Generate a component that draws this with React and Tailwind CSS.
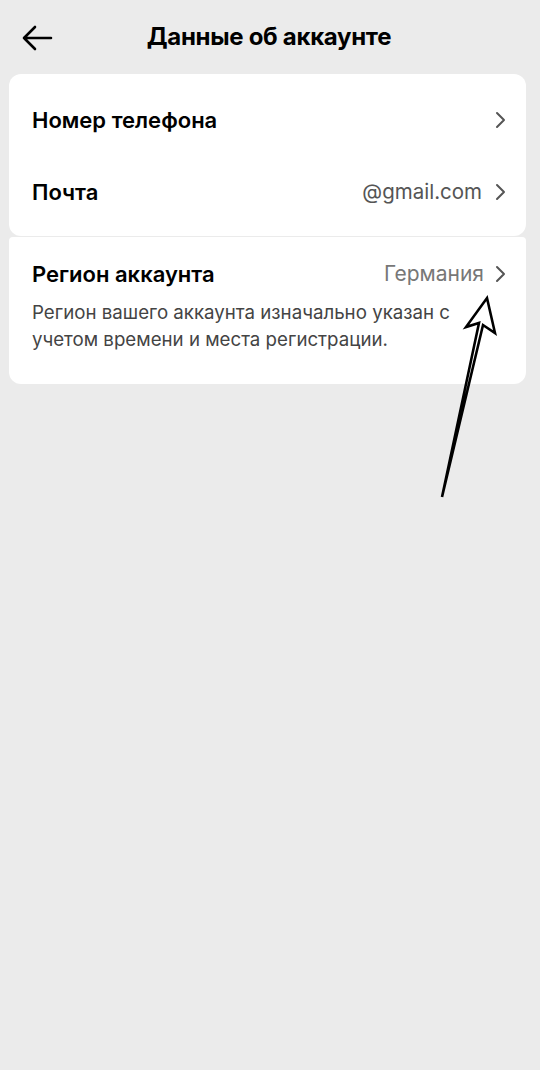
import React from 'react';

const Chevron = () => (
  <svg className="w-[12px] h-[18px] text-[#555]" viewBox="0 0 12 18" fill="none" stroke="currentColor" strokeWidth={2} strokeLinecap="round" strokeLinejoin="round">
    <path d="M3 2l7 7-7 7" />
  </svg>
);

const App = () => {
  return (
    <div className="relative w-[540px] h-[1070px] bg-[#ebebeb] font-['Inter','Noto_Sans',sans-serif] overflow-hidden">
      {/* Header */}
      <div className="relative h-[74px] flex items-center justify-center">
        <button className="absolute left-[21px] top-[24px]">
          <svg className="w-[32px] h-[28px] text-black" viewBox="0 0 32 28" fill="none" stroke="currentColor" strokeWidth={2.6} strokeLinecap="round" strokeLinejoin="round">
            <path d="M30 14H3M14 3L3 14l11 11" />
          </svg>
        </button>
        <h1 className="text-[24px] font-bold text-black tracking-[-0.3px] pr-[2px]">Данные об аккаунте</h1>
      </div>

      <div className="px-[9px] pr-[14px] flex flex-col gap-[1px]">
        {/* Card 1 */}
        <div className="bg-white rounded-[12px] pt-[10px] pb-[8px]">
          <div className="h-[72px] flex items-center justify-between pl-[23px] pr-[20px]">
            <span className="text-[22px] font-semibold text-black">Номер телефона</span>
            <Chevron />
          </div>
          <div className="h-[72px] flex items-center justify-between pl-[23px] pr-[20px]">
            <span className="text-[22px] font-semibold text-black">Почта</span>
            <div className="flex items-center gap-[12px]">
              <span className="text-[20.5px] text-[#555]">@gmail.com</span>
              <Chevron />
            </div>
          </div>
        </div>

        {/* Card 2 */}
        <div className="bg-white rounded-b-[12px] rounded-t-[4px] pt-[19px] pb-[31px] pl-[23px] pr-[20px]">
          <div className="flex items-center justify-between h-[36px]">
            <span className="text-[22px] font-semibold text-black">Регион аккаунта</span>
            <div className="flex items-center gap-[10px]">
              <span className="text-[21px] text-[#777]">Германия</span>
              <Chevron />
            </div>
          </div>
          <p className="mt-[7px] text-[18.7px] leading-[27px] text-[#444] pr-[40px]">
            Регион вашего аккаунта изначально указан с учетом времени и места регистрации.
          </p>
        </div>
      </div>

      {/* Annotation arrow */}
      <svg className="absolute left-0 top-0 pointer-events-none" width="540" height="1070" viewBox="0 0 540 1070" fill="none">
        <path
          d="M442 497 L479 323 L466 327 L487 298 L495 333 L483 325 Z"
          fill="white"
          stroke="black"
          strokeWidth={2.6}
          strokeLinejoin="miter"
        />
      </svg>
    </div>
  );
};

export default App;
